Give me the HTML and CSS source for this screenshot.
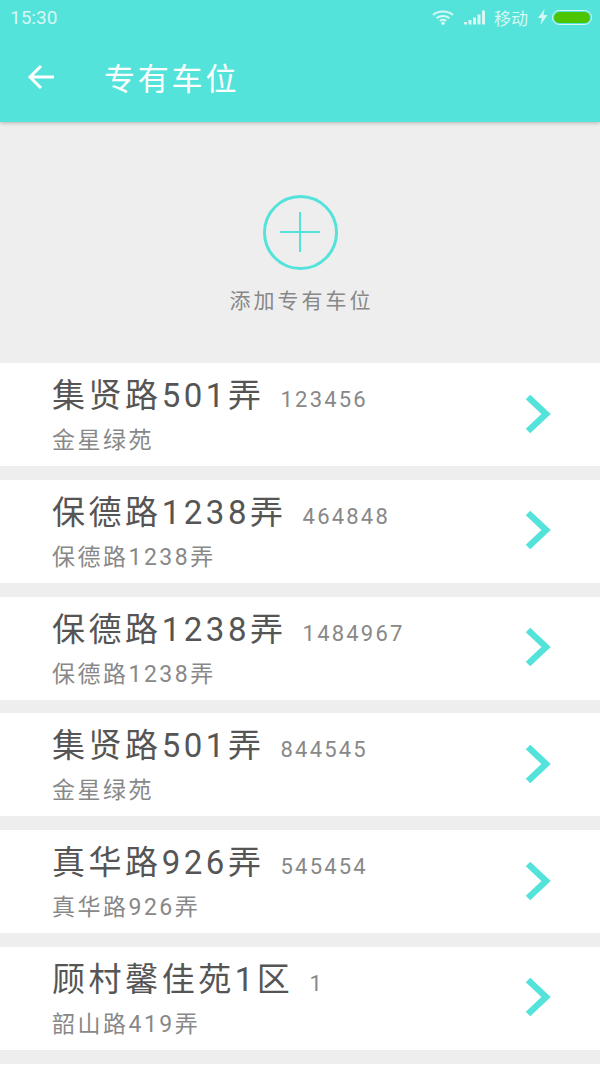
FILE: index.html
```html
<!DOCTYPE html>
<html lang="zh-CN">
<head>
  <meta charset="UTF-8" />
  <meta name="viewport" content="width=device-width, initial-scale=1.0"/>
  <title>专有车位</title>
  <link rel="stylesheet" href="styles.css">
</head>
<body>
  <header class="top">
    <div class="status">
      <span class="time">15:30</span>
      <div class="status-right">
        <svg class="wifi" width="22" height="15" viewBox="0 0 22 15">
          <path d="M1 5C6.500 .4 15.500 .4 21 5" fill="none" stroke="#d6f7f4" stroke-width="2"/>
          <path d="M4.500 8.200C8 5.200 14 5.200 17.500 8.200" fill="none" stroke="#d6f7f4" stroke-width="2"/>
          <path d="M7.800 11C9.600 9.600 12.400 9.600 14.200 11" fill="none" stroke="#d6f7f4" stroke-width="2"/>
          <circle cx="11" cy="13.300" r="1.700" fill="#d6f7f4"/>
        </svg>
        <svg class="signal" width="21" height="15" viewBox="0 0 21 15">
          <path d="M0 12h3v2.500H0zM4.500 10h3v4.500h-3zM9 7.500h3v7H9zM13.500 4.500h3v10h-3zM18 .5h3v14h-3z" fill="#d6f7f4"/>
        </svg>
        <span class="carrier">移动</span>
        <svg class="bolt" width="10" height="16" viewBox="0 0 10 16">
          <path d="M6.500 0L0 9h3.800L2.500 16 9.500 6H5.500z" fill="#d6f7f4"/>
        </svg>
        <div class="battery"><div class="battery-fill"></div></div>
      </div>
    </div>
    <div class="bar">
      <svg class="back" width="28" height="26" viewBox="0 0 28 26">
        <path d="M27 13H3M14 2L3 13l11 11" fill="none" stroke="#fff" stroke-width="3"/>
      </svg>
      <h1>专有车位</h1>
    </div>
  </header>

  <section class="add">
    <div class="add-circle"></div>
    <p>添加专有车位</p>
  </section>

  <ul class="list">
    <li class="row">
      <div class="row-text">
        <div class="row-top"><span class="name">集贤路501弄</span><span class="code">123456</span></div>
        <div class="addr">金星绿苑</div>
      </div>
      <svg class="arrow" width="26" height="40" viewBox="0 0 26 40"><path d="M3 3l18 17L3 37" fill="none" stroke="#54e3da" stroke-width="6.500"/></svg>
    </li>
    <li class="row">
      <div class="row-text">
        <div class="row-top"><span class="name">保德路1238弄</span><span class="code">464848</span></div>
        <div class="addr">保德路1238弄</div>
      </div>
      <svg class="arrow" width="26" height="40" viewBox="0 0 26 40"><path d="M3 3l18 17L3 37" fill="none" stroke="#54e3da" stroke-width="6.500"/></svg>
    </li>
    <li class="row">
      <div class="row-text">
        <div class="row-top"><span class="name">保德路1238弄</span><span class="code">1484967</span></div>
        <div class="addr">保德路1238弄</div>
      </div>
      <svg class="arrow" width="26" height="40" viewBox="0 0 26 40"><path d="M3 3l18 17L3 37" fill="none" stroke="#54e3da" stroke-width="6.500"/></svg>
    </li>
    <li class="row">
      <div class="row-text">
        <div class="row-top"><span class="name">集贤路501弄</span><span class="code">844545</span></div>
        <div class="addr">金星绿苑</div>
      </div>
      <svg class="arrow" width="26" height="40" viewBox="0 0 26 40"><path d="M3 3l18 17L3 37" fill="none" stroke="#54e3da" stroke-width="6.500"/></svg>
    </li>
    <li class="row">
      <div class="row-text">
        <div class="row-top"><span class="name">真华路926弄</span><span class="code">545454</span></div>
        <div class="addr">真华路926弄</div>
      </div>
      <svg class="arrow" width="26" height="40" viewBox="0 0 26 40"><path d="M3 3l18 17L3 37" fill="none" stroke="#54e3da" stroke-width="6.500"/></svg>
    </li>
    <li class="row">
      <div class="row-text">
        <div class="row-top"><span class="name">顾村馨佳苑1区</span><span class="code">1</span></div>
        <div class="addr">韶山路419弄</div>
      </div>
      <svg class="arrow" width="26" height="40" viewBox="0 0 26 40"><path d="M3 3l18 17L3 37" fill="none" stroke="#54e3da" stroke-width="6.500"/></svg>
    </li>
  </ul>
</body>
</html>
```

FILE: styles.css
```css
html, body {
  height: 100%;
}

body {
  margin: 0;
  height: 1067px;
  overflow: hidden;
  background: #fff;
  font-family: Roboto, "Noto Sans CJK SC", sans-serif;
  color: #555;
}

.top {
  height: 122px;
  background: #54e3da;
  box-shadow: 0 1px 4px rgba(0, 0, 0, 0.25);
  position: relative;
}

.status {
  height: 34px;
  display: flex;
  justify-content: space-between;
  align-items: center;
  padding: 0 8px 0 10px;
  color: #d6f7f4;
}

.time {
  font-size: 19px;
}

.status-right {
  display: flex;
  align-items: center;
}

.wifi {
  margin-right: 10px;
}

.signal {
  margin-right: 9px;
}

.carrier {
  font-size: 17px;
  margin-right: 10px;
}

.bolt {
  margin-right: 4px;
}

.battery {
  width: 36px;
  height: 11px;
  border: 1px solid #d6f7f4;
  border-radius: 8px;
  padding: 1px;
  display: flex;
}

.battery-fill {
  flex: 1;
  background: #4cc400;
  border-radius: 6px;
}

.bar {
  height: 85px;
  display: flex;
  align-items: center;
  padding-left: 27px;
}

.back {
  margin-right: 49px;
}

h1 {
  margin: 0 0 1px;
  font-size: 31px;
  font-weight: 400;
  letter-spacing: 2.800px;
  color: #fff;
}

.add {
  height: 241px;
  background: #eee;
  display: flex;
  flex-direction: column;
  align-items: center;
  padding-top: 73px;
  box-sizing: border-box;
}

.add-circle {
  width: 69px;
  height: 69px;
  border: 3px solid #54e3da;
  border-radius: 50%;
  position: relative;
}

.add-circle::before,
.add-circle::after {
  content: "";
  position: absolute;
  background: #54e3da;
}

.add-circle::before {
  left: 14px;
  right: 15px;
  top: 33px;
  height: 2px;
}

.add-circle::after {
  top: 14px;
  bottom: 15px;
  left: 33px;
  width: 2px;
}

.add p {
  margin: 14px 0 0;
  padding-left: 3px;
  font-size: 21px;
  letter-spacing: 3px;
  color: #888;
}

.list {
  list-style: none;
  margin: 0;
  padding: 0 0 14px;
  background: #eee;
}

.row {
  height: 103px;
  background: #fff;
  margin-bottom: 13.800px;
  display: flex;
  justify-content: space-between;
  align-items: center;
  padding: 0 49px 0 52px;
  box-sizing: border-box;
}

.row:last-child {
  margin-bottom: 0;
}

.row-text {
  padding-bottom: 5px;
}

.row-top {
  display: flex;
  align-items: baseline;
  height: 58px;
  padding-top: 1px;
  box-sizing: border-box;
}

.name {
  font-size: 33px;
  letter-spacing: 3.550px;
  color: #555;
}

.code {
  font-size: 22px;
  letter-spacing: 2.200px;
  color: #888;
  margin-left: 16px;
}

.addr {
  font-size: 23px;
  letter-spacing: 2.500px;
  color: #888;
  line-height: 30px;
}

.arrow {
  margin-bottom: 2px;
}
```
